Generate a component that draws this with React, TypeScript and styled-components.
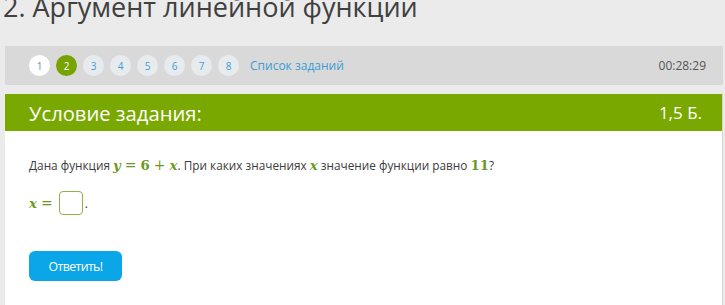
import React from 'react'
import styled, { createGlobalStyle } from 'styled-components'

const Global = createGlobalStyle`
  html, body {
    margin: 0;
    padding: 0;
    background: #ebebeb;
    font-family: 'Open Sans', 'Noto Sans', sans-serif;
    overflow: hidden;
  }
`

const Page = styled.div`
  width: 725px;
  height: 305px;
  overflow: hidden;
`

const Title = styled.h1`
  margin: -11px 0 0 3px;
  font-size: 27px;
  font-weight: 400;
  line-height: 36px;
  color: #404040;
  white-space: nowrap;
`

const NavBar = styled.div`
  margin: 21px 2px 9px 5px;
  height: 39px;
  background: #d9d9d9;
  display: flex;
  align-items: center;
  padding: 0 17px 0 24px;
`

const Pager = styled.div`
  display: flex;
  align-items: center;
  gap: 6px;
  flex: 1;
`

const Dot = styled.span<{ $state: 'done' | 'active' | 'todo' }>`
  width: 21px;
  height: 21px;
  border-radius: 50%;
  display: flex;
  align-items: center;
  justify-content: center;
  font-size: 10px;
  background: ${p => (p.$state === 'active' ? '#77a300' : p.$state === 'done' ? '#ffffff' : '#e8ebee')};
  color: ${p => (p.$state === 'active' ? '#ffffff' : p.$state === 'done' ? '#6a8aa0' : '#3c9dd4')};
`

const ListLink = styled.a`
  margin-left: 5px;
  font-size: 12px;
  color: #3c9dd4;
  text-decoration: none;
`

const Timer = styled.span`
  font-size: 12px;
  color: #555;
`

const Card = styled.div`
  margin: 0 2px 0 5px;
  background: #fff;
  height: 240px;
  border-right: 1px solid #d6d6d6;
`

const CardHead = styled.div`
  height: 37px;
  background: #79a800;
  color: #fff;
  display: flex;
  align-items: center;
  justify-content: space-between;
  padding: 0 20px 0 24px;
  font-size: 20.2px;
`

const Points = styled.span`
  font-size: 17px;
`

const Body = styled.div`
  padding: 25px 24px 0 24px;
  font-size: 11.8px;
  color: #3c3c3c;
`

const Para = styled.p`
  margin: 0;
  line-height: 18px;
`

const M = styled.span<{ $up?: boolean }>`
  font-family: 'DejaVu Serif', 'Liberation Serif', serif;
  font-style: ${p => (p.$up ? 'normal' : 'italic')};
  font-weight: 700;
  color: #6b9a22;
  font-size: 13.3px;
`

const Op = styled.span`
  font-family: 'DejaVu Serif', 'Liberation Serif', serif;
  color: #6b9a22;
  font-size: 14px;
  margin: 0 4px;
`

const AnswerRow = styled.div`
  margin-top: 16px;
  display: flex;
  align-items: center;
`

const Input = styled.span`
  display: inline-block;
  width: 22px;
  height: 22px;
  border: 1.5px solid #8fb04a;
  border-radius: 4px;
  margin: 0 2px 0 2px;
`

const Button = styled.button`
  margin-top: 36px;
  width: 93px;
  height: 30px;
  border: none;
  border-radius: 6px;
  background: #0ba6e8;
  color: #fff;
  font-family: 'Open Sans', sans-serif;
  font-size: 12.3px;
  letter-spacing: -0.6px;
`

const pages = [1, 2, 3, 4, 5, 6, 7, 8]

const App = () => (
  <Page>
    <Global />
    <Title>2. Аргумент линейной функции</Title>
    <NavBar>
      <Pager>
        {pages.map(n => (
          <Dot key={n} $state={n === 1 ? 'done' : n === 2 ? 'active' : 'todo'}>{n}</Dot>
        ))}
        <ListLink>Список заданий</ListLink>
      </Pager>
      <Timer>00:28:29</Timer>
    </NavBar>
    <Card>
      <CardHead>
        <span>Условие задания:</span>
        <Points>1,5 Б.</Points>
      </CardHead>
      <Body>
        <Para>
          Дана функция <M>y</M><Op>=</Op><M $up>6</M><Op>+</Op><M>x</M>. При каких значениях <M>x</M> значение функции равно <M $up>11</M>?
        </Para>
        <AnswerRow>
          <M>x</M><Op>=</Op><Input />.
        </AnswerRow>
        <Button>Ответить!</Button>
      </Body>
    </Card>
  </Page>
)

export default App
